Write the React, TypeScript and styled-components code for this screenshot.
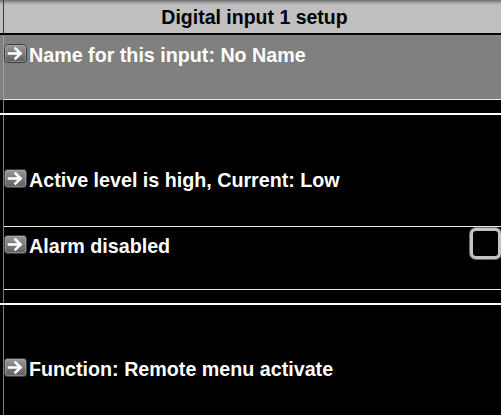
import React from "react";
import styled, { createGlobalStyle } from "styled-components";

const Global = createGlobalStyle`
  html, body { margin: 0; padding: 0; background: #000; }
  body { font-family: "Liberation Sans", Arial, sans-serif; overflow: hidden; }
`;

const Screen = styled.div`
  width: 501px;
  height: 415px;
  background: #000;
  display: flex;
  flex-direction: column;
  overflow: hidden;
`;

const Header = styled.div`
  height: 35px;
  flex: none;
  border-bottom: 2px solid #000;
  background:
    linear-gradient(to right, transparent 3px, #3a3a3a 3px, #3a3a3a 4px, transparent 4px),
    linear-gradient(to bottom, #6e6e6e 0px, #a8a8a8 3px, #c0c0c0 5px, #c0c0c0 100%);
  display: flex;
  align-items: center;
  justify-content: center;
  padding-left: 8px;
  padding-top: 2px;
  box-sizing: border-box;
  font-weight: bold;
  font-size: 19.5px;
  color: #000;
`;

const Body = styled.div`
  flex: 1;
  margin-left: 3px;
  border-left: 1px solid #7a7a7a;
  display: flex;
  flex-direction: column;
`;

const Row = styled.div<{ $h: number; $selected?: boolean; $border?: boolean }>`
  height: ${(p) => p.$h}px;
  flex: none;
  box-sizing: border-box;
  background: ${(p) => (p.$selected ? "#808080" : "#000")};
  box-shadow: ${(p) => (p.$selected ? "-1px 0 0 #a0a0a0, -4px 0 0 #808080" : "none")};
  border-bottom: ${(p) => (p.$border ? "1px solid #e8e8e8" : "none")};
  display: flex;
  align-items: flex-start;
  padding-top: ${(p) => (p.$selected ? 9 : 8)}px;
`;

const Label = styled.span`
  color: #fff;
  font-weight: bold;
  font-size: 19.7px;
  line-height: 22px;
  margin-left: 2px;
  flex: 1;
`;

const Gap = styled.div<{ $h: number }>`
  height: ${(p) => p.$h}px;
  flex: none;
`;

const Separator = styled.div`
  height: 2px;
  flex: none;
  margin-left: -4px;
  background: #fff;
`;

const IconBox = styled.span`
  width: 23px;
  height: 19px;
  flex: none;
  margin-top: 0px;
  display: block;
`;

const CheckBox = styled.span`
  width: 31px;
  height: 31px;
  box-sizing: border-box;
  flex: none;
  margin-top: -7px;
  border: 3px solid #c4c4c4;
  border-radius: 6px;
  box-shadow: 0 0 0 1px #6a6a6a;
  background: #000;
`;

function ArrowIcon() {
  return (
    <IconBox>
      <svg width="23" height="19" viewBox="0 0 23 19">
        <defs>
          <linearGradient id="ag" x1="0" y1="0" x2="0" y2="1">
            <stop offset="0" stopColor="#9a9a9a" />
            <stop offset="1" stopColor="#5c5c5c" />
          </linearGradient>
        </defs>
        <rect x="0.5" y="0.5" width="22" height="18" rx="3" fill="url(#ag)" stroke="#3c3c3c" />
        <rect x="1.5" y="1.5" width="20" height="16" rx="2" fill="none" stroke="#b0b0b0" strokeOpacity="0.5" />
        <path d="M5 9.5 H16.5 M11.5 4.5 L16.5 9.5 L11.5 14.5" stroke="#fff" strokeWidth="2.6" fill="none" strokeLinecap="square" />
      </svg>
    </IconBox>
  );
}

export default function App() {
  return (
    <Screen>
      <Global />
      <Header>Digital input 1 setup</Header>
      <Body>
        <Row $h={65} $selected $border>
          <ArrowIcon />
          <Label>Name for this input: No Name</Label>
        </Row>
        <Gap $h={13} />
        <Separator />
        <Gap $h={46} />
        <Row $h={66} $border>
          <ArrowIcon />
          <Label>Active level is high, Current: Low</Label>
        </Row>
        <Row $h={63} $border>
          <ArrowIcon />
          <Label>Alarm disabled</Label>
          <CheckBox />
        </Row>
        <Gap $h={13} />
        <Separator />
        <Gap $h={45} />
        <Row $h={65}>
          <ArrowIcon />
          <Label>Function: Remote menu activate</Label>
        </Row>
      </Body>
    </Screen>
  );
}
